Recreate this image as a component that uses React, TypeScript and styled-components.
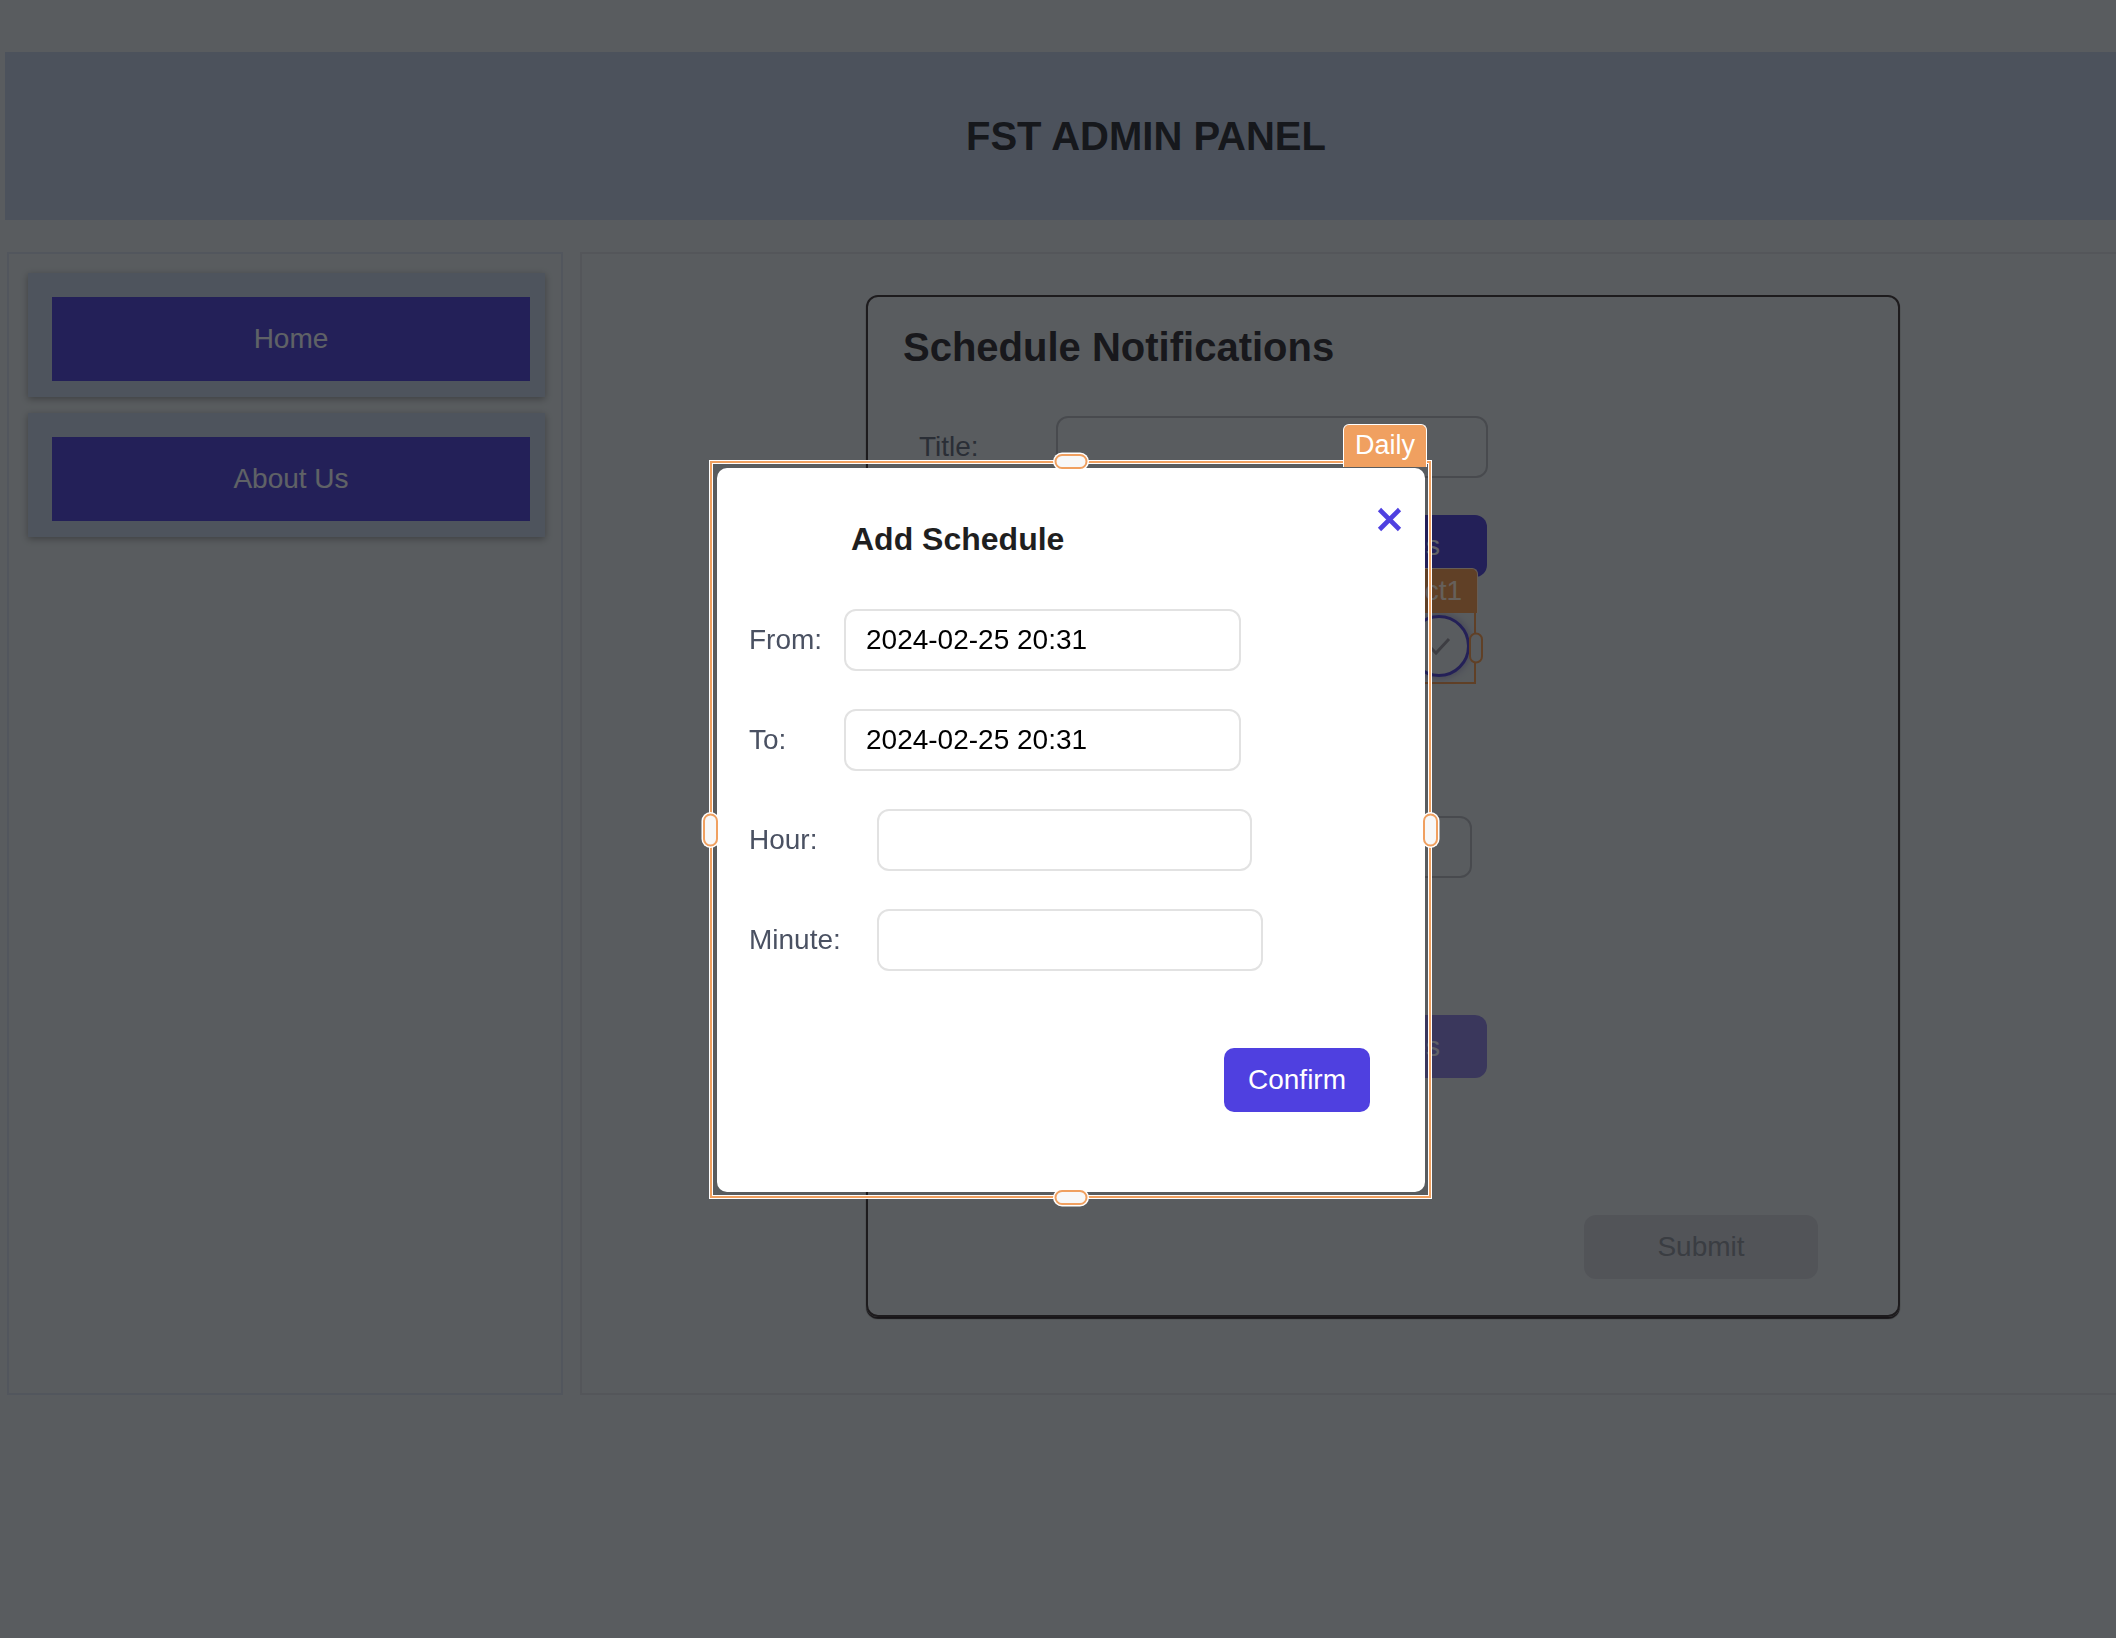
import React from "react";
import styled, { createGlobalStyle } from "styled-components";

const FONT = `"Liberation Sans", Arial, Helvetica, sans-serif`;
const ORANGE = "#f0a060";
const INDIGO = "#4f40e0";

const GlobalStyle = createGlobalStyle`
  * { box-sizing: border-box; }
  html, body {
    margin: 0;
    padding: 0;
    overflow: hidden;
  }
  body {
    width: 2116px;
    height: 1638px;
    background: #dee6ed;
    font-family: ${FONT};
  }
`;

/* ---------- page (under the backdrop) ---------- */

const Page = styled.div`
  width: 2300px;
  padding: 52px 0 0 5px;
`;

const Header = styled.header`
  width: 2282px;
  height: 168px;
  background: #becde6;
  display: flex;
  align-items: center;
  justify-content: center;
`;

const HeaderTitle = styled.h1`
  margin: 0;
  font-size: 40px;
  font-weight: 700;
  color: #373c46;
`;

const Layout = styled.div`
  display: flex;
  align-items: flex-start;
  gap: 17px;
  margin-top: 32px;
  padding-left: 2px;
`;

const Sidebar = styled.nav`
  width: 556px;
  height: 1143px;
  border: 2px solid #cdd8e8;
  padding: 19px 16px 19px 19px;
  display: flex;
  flex-direction: column;
  gap: 16px;
`;

const NavItem = styled.div`
  background: #c3d2e8;
  padding: 24px 15px 16px 24px;
  box-shadow: 0 2px 7px rgba(0, 0, 0, 0.3);
`;

const NavButton = styled.button`
  display: block;
  width: 100%;
  height: 84px;
  border: none;
  background: #5850dc;
  color: #eef5ff;
  font-family: ${FONT};
  font-size: 28px;
  cursor: pointer;
`;

const Main = styled.main`
  width: 1606px;
  height: 1143px;
  border: 2px solid #d2d7e1;
  display: flex;
  justify-content: center;
  align-items: flex-start;
  padding-top: 41px;
`;

const ScheduleCard = styled.section`
  width: 1034px;
  height: 1022px;
  border: 2px solid #4a444a;
  border-radius: 12px;
  box-shadow: 0 2px 1px #3a343a;
  padding: 28px 0 0 35px;
`;

const CardTitle = styled.h2`
  margin: 0;
  font-size: 40px;
  font-weight: 700;
  color: #3c3e46;
`;

const FormArea = styled.div`
  padding-left: 16px;
  display: flex;
  flex-direction: column;
  align-items: flex-start;
`;

const FormRow = styled.div<{ $top: number }>`
  display: flex;
  align-items: center;
  margin-top: ${(p) => p.$top}px;
`;

const FormLabel = styled.label`
  width: 137px;
  font-size: 28px;
  color: #697387;
`;

const GhostInput = styled.div<{ $w: number; $top?: number; $indent?: number }>`
  width: ${(p) => p.$w}px;
  height: 62px;
  margin-top: ${(p) => p.$top ?? 0}px;
  margin-left: ${(p) => p.$indent ?? 0}px;
  border: 2px solid #b4b9c3;
  border-radius: 12px;
`;

const WideButton = styled.button<{ $top: number; $tone: "solid" | "soft"; $h: number }>`
  margin-top: ${(p) => p.$top}px;
  margin-left: 137px;
  width: 431px;
  height: ${(p) => p.$h}px;
  border: none;
  border-radius: 12px;
  background: ${(p) => (p.$tone === "solid" ? "#5850dc" : "#918ae6")};
  color: #eef0ff;
  font-family: ${FONT};
  font-size: 28px;
  display: flex;
  align-items: center;
  justify-content: flex-end;
  padding: 0 47px 0 0;
`;

const SelectBox = styled.div`
  position: relative;
  margin-top: 34px;
  margin-left: 411px;
  width: 146px;
  height: 73px;
  border: 2px solid ${ORANGE};
  display: flex;
  justify-content: flex-end;
  padding: 2px 4px 0 0;
`;

const SelectTag = styled.span`
  position: absolute;
  bottom: 100%;
  right: -4px;
  height: 45px;
  padding: 0 15px 0 14px;
  background: ${ORANGE};
  border: 1.5px solid #ffe8d6;
  border-bottom: none;
  border-radius: 6px 6px 0 0;
  color: #fff0e4;
  font-size: 28px;
  line-height: 43px;
`;

const CheckCircle = styled.div`
  width: 62px;
  height: 62px;
  border-radius: 50%;
  border: 3px solid #5a52da;
  box-shadow: 0 0 6px 2px rgba(140, 140, 200, 0.5);
  display: flex;
  align-items: center;
  justify-content: center;
`;

const SideGrip = styled.span`
  position: absolute;
  right: -9px;
  top: 50%;
  transform: translateY(-50%);
  width: 14px;
  height: 31px;
  border: 2px solid ${ORANGE};
  border-radius: 7px;
  background: #dee6ed;
`;

const SubmitButton = styled.button`
  margin-top: 137px;
  margin-left: 665px;
  width: 234px;
  height: 64px;
  border: none;
  border-radius: 12px;
  background: #cdd2dd;
  color: #9198a5;
  font-family: ${FONT};
  font-size: 28px;
`;

/* ---------- modal (over the backdrop) ---------- */

const Backdrop = styled.div`
  position: fixed;
  inset: 0;
  background: rgba(0, 0, 0, 0.6);
`;

const ModalCard = styled.div`
  position: absolute;
  left: 717px;
  top: 468px;
  width: 708px;
  height: 724px;
  background: #ffffff;
  border-radius: 10px;
`;

const SelectionFrame = styled.div`
  position: absolute;
  left: -7px;
  top: -7px;
  right: -6px;
  bottom: -6px;
  border: 2px solid ${ORANGE};
  box-shadow: 0 0 0 1px #ffffff, inset 0 0 0 1px #ffffff;
  pointer-events: none;
`;

const Grip = styled.span<{ $side: "top" | "bottom" | "left" | "right" }>`
  position: absolute;
  background: #f8f8f8;
  border: 2px solid ${ORANGE};
  border-radius: 8px;
  box-shadow: 0 0 0 1.5px #ffffff;
  ${(p) =>
    p.$side === "top" || p.$side === "bottom"
      ? `width: 33px; height: 15px; left: 50%; transform: translateX(-50%); ${p.$side}: -9px;`
      : `width: 15px; height: 33px; top: 50%; transform: translateY(-50%); ${p.$side}: -9px;`}
`;

const NameTag = styled.span`
  position: absolute;
  right: 2px;
  top: -39px;
  height: 43px;
  padding: 0 11px 0 11px;
  background: ${ORANGE};
  border: 1.5px solid #ffffff;
  border-bottom: none;
  border-radius: 6px 6px 0 0;
  color: #ffffff;
  font-size: 27px;
  line-height: 41px;
`;

const ModalHeader = styled.div`
  display: flex;
  justify-content: space-between;
  align-items: flex-start;
  padding: 39px 23px 0 134px;
`;

const ModalTitle = styled.h3`
  margin: 14px 0 0;
  font-size: 32px;
  font-weight: 700;
  color: #1f1f1f;
`;

const CloseButton = styled.button`
  width: 25px;
  height: 25px;
  padding: 0;
  border: none;
  background: none;
  cursor: pointer;
  display: block;
`;

const Fields = styled.div`
  margin-top: 51px;
  padding-left: 32px;
  display: flex;
  flex-direction: column;
  gap: 38px;
`;

const Field = styled.div`
  display: flex;
  align-items: center;
  height: 62px;
`;

const FieldLabel = styled.label<{ $w: number }>`
  width: ${(p) => p.$w}px;
  flex: none;
  font-size: 28px;
  color: #4a5162;
`;

const FieldInput = styled.input<{ $w: number }>`
  width: ${(p) => p.$w}px;
  height: 62px;
  padding: 0 20px;
  border: 2px solid #e2e2e2;
  border-radius: 12px;
  background: #ffffff;
  font-family: ${FONT};
  font-size: 28px;
  color: #000000;
  outline: none;
`;

const Footer = styled.div`
  display: flex;
  justify-content: flex-end;
  margin-top: 77px;
  padding-right: 55px;
`;

const ConfirmButton = styled.button`
  width: 146px;
  height: 64px;
  border: none;
  border-radius: 10px;
  background: ${INDIGO};
  color: #ffffff;
  font-family: ${FONT};
  font-size: 28px;
  cursor: pointer;
`;

const fields = [
  { label: "From:", labelW: 95, inputW: 397, value: "2024-02-25 20:31" },
  { label: "To:", labelW: 95, inputW: 397, value: "2024-02-25 20:31" },
  { label: "Hour:", labelW: 128, inputW: 375, value: "" },
  { label: "Minute:", labelW: 128, inputW: 386, value: "" },
];

export default function App() {
  return (
    <>
      <GlobalStyle />
      <Page>
        <Header>
          <HeaderTitle>FST ADMIN PANEL</HeaderTitle>
        </Header>
        <Layout>
          <Sidebar>
            <NavItem>
              <NavButton>Home</NavButton>
            </NavItem>
            <NavItem>
              <NavButton>About Us</NavButton>
            </NavItem>
          </Sidebar>
          <Main>
            <ScheduleCard>
              <CardTitle>Schedule Notifications</CardTitle>
              <FormArea>
                <FormRow $top={46}>
                  <FormLabel>Title:</FormLabel>
                  <GhostInput $w={432} />
                </FormRow>
                <WideButton $top={37} $h={62} $tone="solid">
                  Add Schedules
                </WideButton>
                <SelectBox>
                  <SelectTag>Select1</SelectTag>
                  <CheckCircle>
                    <svg width="26" height="22" viewBox="0 0 26 22">
                      <path d="M3 11 L10 18 L23 4" fill="none" stroke="#9a9aa6" strokeWidth="3" />
                    </svg>
                  </CheckCircle>
                  <SideGrip />
                </SelectBox>
                <GhostInput $w={416} $top={132} $indent={137} />
                <WideButton $top={137} $h={63} $tone="soft">
                  View Schedules
                </WideButton>
                <SubmitButton>Submit</SubmitButton>
              </FormArea>
            </ScheduleCard>
          </Main>
        </Layout>
      </Page>

      <Backdrop>
        <ModalCard role="dialog" aria-label="Add Schedule">
          <ModalHeader>
            <ModalTitle>Add Schedule</ModalTitle>
            <CloseButton aria-label="Close">
              <svg width="25" height="25" viewBox="0 0 25 25">
                <path
                  d="M2.5 2.5 L22.5 22.5 M22.5 2.5 L2.5 22.5"
                  fill="none"
                  stroke={INDIGO}
                  strokeWidth="4.6"
                />
              </svg>
            </CloseButton>
          </ModalHeader>
          <Fields>
            {fields.map((f) => (
              <Field key={f.label}>
                <FieldLabel $w={f.labelW}>{f.label}</FieldLabel>
                <FieldInput $w={f.inputW} value={f.value} readOnly />
              </Field>
            ))}
          </Fields>
          <Footer>
            <ConfirmButton>Confirm</ConfirmButton>
          </Footer>
          <SelectionFrame>
            <Grip $side="top" />
            <Grip $side="bottom" />
            <Grip $side="left" />
            <Grip $side="right" />
            <NameTag>Daily</NameTag>
          </SelectionFrame>
        </ModalCard>
      </Backdrop>
    </>
  );
}
